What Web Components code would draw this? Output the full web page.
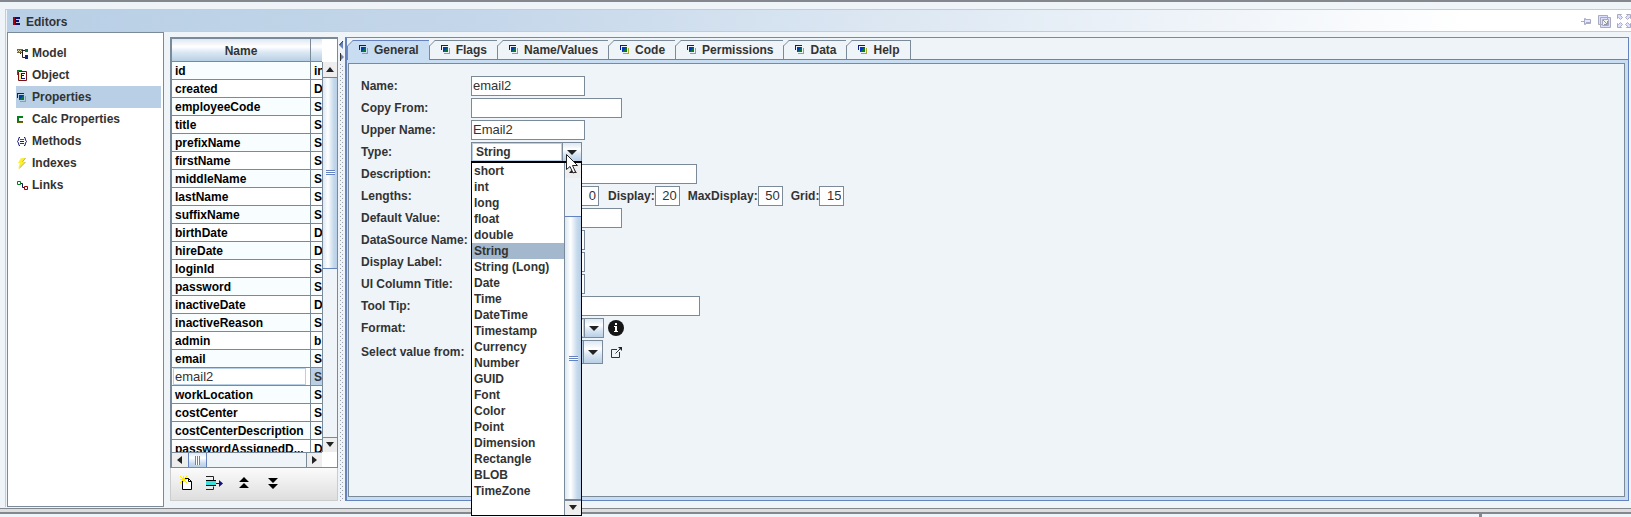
<!DOCTYPE html>
<html lang="en">
<head>
<meta charset="utf-8">
<title>Editors</title>
<style>
  html, body { margin: 0; height: 100%; }
  body { overflow: hidden; background: #eff4f8; color: #333; font: bold 12px/18px "Liberation Sans", Arial, sans-serif; }
</style>
</head>
<body>
<editor-window heading="Editors">
  <side-nav slot="nav"></side-nav>
  <property-table slot="list"></property-table>
  <split-divider slot="list"></split-divider>
  <tab-panel slot="main"><property-form></property-form></tab-panel>
</editor-window>

<script>
const ICONS = {
  model: ['0 0 11 11', '<path fill="#776a30" d="M0 1h6v4H0z"/><path stroke="#ddd6a0" stroke-dasharray="1 1" d="M1 2.500h4M0 3.500h6"/><path fill="none" stroke="#222" d="M3.500 5v1M5 2.500h3M5.500 3v6.500h3"/><path fill="#0a7a50" d="M8 1h3v3H8z"/><path fill="#10287c" d="M8 7h3v4H8z"/>'],
  object: ['0 0 10 11', '<path fill="#fff" stroke="#7c1010" d="M1.500 1.500h8v9h-8z"/><path fill="#008020" d="M0 0h5v1H1v4H0z"/><path fill="#fff08a" d="M2 3h2v7H2z"/><path fill="none" stroke="#101080" d="M4 3.500h4M4 5.500h3M4 8.500h4M4.500 3v6"/>'],
  props: ['0 0 9 9', '<path fill="#0a1c86" d="M0 0h7v1H1v4H0z"/><path fill="#0038c8" d="M2 2h5v5H2z"/><path fill="#087a18" d="M7 2v5H2z"/><path fill="#a9a826" d="M8 3h1v6H3V8h5z"/>'],
  calc: ['0 0 6 7', '<path fill="#008018" d="M0 0h6v2H2v3h4v2H0z"/><path fill="#6b6510" d="M1 6h5v1H1z"/>'],
  methods: ['0 0 10 9', '<path fill="none" stroke="#181880" d="M3 .500H2L1.500 3 .500 4.500l1 1.500L2 8.500h1M7 .500h1L8.500 3l1 1.500-1 1.500L8 8.500H7"/><path stroke="#008020" d="M3 2.500h4"/><path stroke="#222" d="M3 4.500h4"/><path stroke="#901010" d="M3 6.500h4"/>'],
  indexes: ['0 0 9 11', '<path fill="#a9a9a0" d="M9 0H5L2 5h2l-2 6 7-7H6l3-4z"/><path fill="#ffee2e" d="M8 0H4L1 5h2L1 11l7-7H5z"/>'],
  links: ['0 0 11 9', '<path fill="#fff" stroke="#008020" d="M.500.500h3v3h-3z"/><path fill="none" stroke="#101050" d="M4 2.500h1.500v4H7"/><path fill="#fff" stroke="#900" d="M7.500 5.500h3v3h-3z"/>'],
  logo: ['0 0 7 8', '<path fill="#10106c" d="M0 0h7v2H3v1h3v2H3v1h4v2H0z"/><path fill="#a00010" d="M0 0h2v8H0z"/>'],
  pin: ['0 0 11 9', '<path fill="#e4e6ff" stroke="#a8abc8" d="M3.500 1.500h1v1h5v4h-5v1h-1zM0 4.500h3M5 5.500h5"/>'],
  restore: ['0 0 13 13', '<path fill="#dcdfff" stroke="#a8abc0" d="M.500.500h9v9h-9zM2.500 2.500h10v10h-10z"/><path fill="#f3f3e8" stroke="#a8abc0" d="M4.500 4.500h6v6h-6z"/><path fill="none" stroke="#9095b0" d="M5 5l4 4M6 9.500h3.500V6"/>'],
  expand: ['0 0 14 14', '<path fill="#dcdfff" stroke="#a8abc0" d="M.500.500h4l-1 1 2 2-2 2-2-2-1 1zM13.500.500h-4l1 1-2 2 2 2 2-2 1 1zM.500 13.500h4l-1-1 2-2-2-2-2 2-1-1zM13.500 13.500h-4l1-1-2-2 2-2 2 2 1-1z"/>'],
  newdoc: ['0 0 12 14', '<path fill="#fff" stroke="#000" d="M2.500 2.500h6l3 3v8h-9z"/><path fill="none" stroke="#000" d="M8.500 2.500v3h3"/><path stroke="#ffe800" d="M0 0l7 7M7 0L0 7M3.500 0v6M0 3.500h7"/>'],
  insert: ['0 0 17 14', '<path fill="none" stroke="#222" d="M0 .500h7.500v4M0 13.500h7.500v-3"/><path fill="#38e0dc" d="M0 5h10v4H0z"/><path stroke="#000" d="M0 4.500h10M0 9.500h10"/><path stroke="#101080" d="M10 7.500h5"/><path fill="#101080" d="M13 4l4 3.500-4 3.500z"/>'],
  top: ['0 0 10 12', '<path d="M5 0l5 5H0zM5 6l5 5H0z"/>'],
  bottom: ['0 0 10 12', '<path d="M0 1h10L5 6zM0 7h10l-5 5z"/>'],
  open: ['0 0 11 11', '<path fill="none" stroke="#333" d="M6 2.500H.500v8h8V5M4.500 6.500l5-5"/><path fill="#222" d="M7 0h4v4z"/>'],
  info: ['0 0 16 16', '<circle cx="8" cy="8" r="8" fill="#151515"/><path fill="#fff" d="M7 3h2v2H7zM6 6h3v5h1v1H6v-1h1V7H6z"/>'],
  cursor: ['0 0 13 20', '<path fill="#fff" stroke="#222" d="M.500.500v15l3.500-3 3 6.500 2.500-1-3-6.500h5z"/>']
};

const define = (name, html) => customElements.define(name, class extends HTMLElement {
  connectedCallback() {
    if (this.shadowRoot) return;
    const root = this.attachShadow({ mode: 'open' });
    const t = document.createElement('template');
    t.innerHTML = typeof html === 'function' ? html(this) : html;
    root.append(t.content.cloneNode(true));
  }
});

define('app-icon', el => {
  const [box, art] = ICONS[el.getAttribute('name')];
  const [, , w, h] = box.split(' ');
  return `<style>:host{display:inline-flex;flex:none}svg{display:block}</style>
    <svg viewBox="${box}" width="${w}" height="${h}" aria-hidden="true">${art}</svg>`;
});

/* Scroll bar; before/size/after are the proportions of the track. */
define('scroll-bar', el => {
  const n = a => el.getAttribute(a) || 0;
  const h = el.hasAttribute('horizontal');
  const [a, b] = h ? ['M6 0v8L1 4z', 'M1 0v8l5-4z'] : ['M0 6h8L4 1z', 'M0 1h8L4 6z'];
  const arrow = d => `<svg width="8" height="8" viewBox="0 0 8 8"><path fill="#222" d="${d}"/></svg>`;
  return `<style>
    :host{display:flex;flex-direction:${h ? 'row' : 'column'};box-sizing:border-box;${h ? 'height' : 'width'}:15px;background:#eff4f8;border-${h ? 'top' : 'left'}:1px solid #7a8a99}
    button{flex:none;${h ? 'width:16px;height:14px' : 'height:15px'};padding:0;border:0;background:#eee;display:grid;place-items:center}
    button:last-child{border-${h ? 'left' : 'top'}:1px solid #7a8a99}
    .before{flex:${n('before')} 0 0}.after{flex:${n('after')} 0 0}
    .thumb{flex:${n('size')} 0 0;box-sizing:border-box;border:solid #6382bf;border-width:${h ? '0 1px' : '1px 0'};display:flex;align-items:center;justify-content:center;
      background:linear-gradient(${h ? 180 : 90}deg,#dbe8f4,#fff 35%,#c6daec 75%,#b8cfe5)}
    i{${h ? 'width:5px;height:9px' : 'width:9px;height:5px'};background:repeating-linear-gradient(${h ? 90 : 180}deg,#6382bf 0 1px,#fff 1px 2px)}
  </style><button aria-label="Back">${arrow(a)}</button><div class="before"></div><div class="thumb"><i></i></div><div class="after"></div><button aria-label="Forward">${arrow(b)}</button>`;
});

define('editor-window', el => `<style>
  :host{display:flex;flex-direction:column;height:100vh;box-sizing:border-box;border-top:2px solid #85878f;background:#eff4f8}
  .frame{flex:1;min-height:0;display:flex;flex-direction:column;margin:7px 0 1px 5px;border-top:1px solid #b8cfe5;border-left:1px solid #b8cfe5}
  header{flex:none;box-sizing:border-box;height:22px;margin-left:1px;display:flex;align-items:center;padding:1px 0 0 6px;border-bottom:1px solid #b8cfe5;background:linear-gradient(90deg,#b8cfe5,#c5d7ea 30%,#fff 90%)}
  h1{margin:0 auto 0 6px;padding-top:1px;font:inherit}
  .tools{display:flex;align-items:center;gap:6px}
  .tools button{padding:0;border:0;background:none;display:flex}
  .body{flex:1;min-height:0;display:flex}
  .list{display:flex;padding:5px 0 6px 6px}
  .main{flex:1;min-width:0;display:flex;padding:5px 2px 6px 0}
  ::slotted(tab-panel){flex:1}
  footer{flex:none;height:3px;border:solid #85878f;border-width:1px 0 2px;background:#ddd}
  .status{height:3px;flex:none;display:flex}
  .status span{flex:0 1 1479px;border-right:3px solid #85878f}
</style>
<div class="frame">
  <header><app-icon name="logo"></app-icon><h1>${el.getAttribute('heading')}</h1>
    <div class="tools"><button aria-label="Pin"><app-icon name="pin"></app-icon></button><button aria-label="Restore"><app-icon name="restore"></app-icon></button><button aria-label="Maximize"><app-icon name="expand"></app-icon></button></div></header>
  <div class="body"><slot name="nav"></slot><div class="list"><slot name="list"></slot></div><div class="main"><slot name="main"></slot></div></div>
</div><footer></footer><div class="status"><span></span></div>`);

define('side-nav', () => {
  const items = [['model', 'Model'], ['object', 'Object'], ['props', 'Properties'], ['calc', 'Calc Properties'], ['methods', 'Methods'], ['indexes', 'Indexes'], ['links', 'Links']];
  return `<style>
    :host{display:block;box-sizing:border-box;width:157px;margin-left:1px;padding:9px 2px 0 8px;background:#fff;border:1px solid #7a8a99}
    ul{margin:0;padding:0;list-style:none}
    a{display:grid;grid-template-columns:16px 1fr;align-items:center;height:22px;color:inherit;text-decoration:none}
    a[aria-current]{background:#b8cfe5}
    app-icon{margin-left:1px}
  </style><nav><ul>${items.map(([i, t]) => `<li><a href="#${i}"${i === 'props' ? ' aria-current="page"' : ''}><app-icon name="${i}"></app-icon>${t}</a></li>`).join('')}</ul></nav>`;
});

define('property-table', () => {
  const rows = 'id:in,created:D,employeeCode:S,title:S,prefixName:S,firstName:S,middleName:S,lastName:S,suffixName:S,birthDate:D,hireDate:D,loginId:S,password:S,inactiveDate:D,inactiveReason:S,admin:b,email:S,email2:S,workLocation:S,costCenter:S,costCenterDescription:S,passwordAssignedD...:D'.split(',').map(r => r.split(':'));
  return `<style>
    :host{display:flex;flex-direction:column;width:168px}
    .box{flex:1;min-height:0;display:grid;grid-template:minmax(0,1fr) 15px / minmax(0,1fr) 15px;border:2px solid #7a8a99;border-width:2px 1px 1px 2px;background:#fff}
    .view{overflow:hidden}
    table{border-collapse:separate;border-spacing:0;table-layout:fixed;width:213px;color:#000}
    th,td{box-sizing:border-box;padding:0 3px;border:solid #7a8a99;border-width:0 1px 1px 0;text-align:left;white-space:nowrap;overflow:hidden}
    th{height:23px;padding-top:1px;color:#333;text-align:center;background:linear-gradient(#dde8f3,#fff 35%,#dce8f4 60%,#b8cfe5)}
    td{height:18px;line-height:15px;padding-top:2px}
    tr:nth-child(odd) td{background:#f8feff}
    tr.sel td:first-child{padding:0 1px;background:#fff}
    tr.sel td:last-child{background:#b8cfe5;color:#333}
    input{display:block;box-sizing:border-box;width:133px;height:17px;padding:0 1px;border:1px solid #b8cfe5;font:13px "Liberation Sans",Arial,sans-serif;color:#333;background:#fff}
    .v{margin-top:23px}
    .bar{flex:none;display:flex;align-items:center;height:32px;background:linear-gradient(#fbfbfb,#dedede);border:solid #ccc;border-width:0 1px 1px}
    .bar button{width:29px;height:30px;padding:0 0 2px;border:0;background:none;display:grid;place-items:center}
  </style>
  <div class="box"><div class="view"><table><colgroup><col style="width:139px"><col></colgroup><thead><tr><th>Name</th><th></th></tr></thead><tbody>
  ${rows.map(([n, t]) => n === 'email2' ? `<tr class="sel"><td><input aria-label="Property name" value="${n}"></td><td>${t}</td></tr>` : `<tr><td>${n}</td><td>${t}</td></tr>`).join('')}
  </tbody></table></div><scroll-bar class="v" size="191" after="169"></scroll-bar><scroll-bar horizontal size="17" after="100"></scroll-bar></div>
  <div class="bar"><button aria-label="New"><app-icon name="newdoc"></app-icon></button><button aria-label="Insert"><app-icon name="insert"></app-icon></button><button aria-label="Move to top"><app-icon name="top"></app-icon></button><button aria-label="Move to bottom"><app-icon name="bottom"></app-icon></button></div>`;
});

define('split-divider', `<style>
  :host{display:flex;flex-direction:column;align-items:center;width:7px;box-sizing:border-box}
  svg{flex:none;margin-top:3px}
  i{flex:1;width:4px;background:conic-gradient(from 270deg at 1px 1px,#999fa8 90deg,transparent 0) 0 0/4px 4px,conic-gradient(from 270deg at 1px 1px,#999fa8 90deg,transparent 0) 2px 2px/4px 4px}
</style><svg width="5" height="24" viewBox="0 0 5 24"><path fill="#6382bf" d="M4 1v8L0 5zM1 13v8l4-4z"/><path fill="none" stroke="#333" d="M4 1L.500 5M1.500 13v8"/></svg><i></i>`);

define('tab-panel', () => `<style>
  :host{display:flex;flex-direction:column;min-width:0;box-sizing:border-box;border:solid #6382bf;border-width:1px 1px 1px 2px;border-top-color:#7a8a99}
  .tabs{flex:none;display:flex;padding:2px 0 0 1px;border-bottom:1px solid #6382bf}
  button{position:relative;box-sizing:border-box;height:19px;margin:0;padding:0 10px 0 11px;border:solid #7a8a99;border-width:1px 1px 0 0;display:flex;align-items:center;gap:6px;background:#eff4f8;color:inherit;font:inherit;line-height:18px}
  button svg{position:absolute;left:-1px;top:-1px}
  button app-icon{margin-bottom:2px}
  button[aria-selected=true]{background:#c8ddf2;border-color:#6382bf;height:20px;margin-bottom:-1px;padding-bottom:1px}
  .pane{flex:1;min-height:0;border:solid #c8ddf2;border-width:3px 3px 3px 1px;display:flex}
  .in{flex:1;border:1px solid #7a8a99}
</style><div class="tabs" role="tablist">${['General', 'Flags', 'Name/Values', 'Code', 'Permissions', 'Data', 'Help'].map((t, i) => `<button role="tab" aria-selected="${!i}"><svg width="7" height="19" viewBox="0 0 7 19"><path fill="#eff4f8" d="M0 0h6L0 6z"/><path fill="none" stroke="#7a8a99" d="M.500 19V6l5.500-5.500"/></svg><app-icon name="props"></app-icon>${t}</button>`).join('')}</div>
<div class="pane" role="tabpanel"><div class="in"><slot></slot></div></div>`);

define('combo-box', el => {
  const list = (el.getAttribute('options') || '').split(',').filter(Boolean);
  const value = el.getAttribute('value') || '';
  const open = el.hasAttribute('open');
  return `<style>
    :host{display:block;position:relative;box-sizing:border-box;width:111px;height:20px;border:1px solid #7a8a99;background:#fff}
    .face{display:flex;height:100%}
    select{flex:1;min-width:0;appearance:none;box-sizing:border-box;border:1px solid #b8cfe5;border-radius:0;padding:0 3px;margin:0;background:#fff;color:inherit;font:inherit;line-height:16px}
    .arrow{flex:none;width:18px;border-left:1px solid #7a8a99;display:grid;place-items:center;background:linear-gradient(#dde8f3,#fff 35%,#dce8f4 60%,#b8cfe5)}
    .pop{position:absolute;z-index:1;top:100%;left:-1px;right:-1px;display:flex;border:1px solid #000;border-top-width:2px;background:#fff}
    ul{flex:1;margin:0;padding:0 0 16px;list-style:none}
    li{height:16px;line-height:16px;padding-left:2px;white-space:nowrap}
    li[aria-selected=true]{background:#a3b8cc}
    scroll-bar{width:17px}
    .cursor{position:absolute;z-index:2;right:2px;top:11px}
  </style><div class="face"><select aria-label="${el.getAttribute('label')}"><option>${value}</option></select><span class="arrow"><svg width="10" height="5" viewBox="0 0 10 5"><path fill="#222" d="M0 0h10L5 5z"/></svg></span></div>
  ${open ? `<div class="pop"><ul role="listbox" aria-label="${el.getAttribute('label')}">${list.map(o => `<li role="option" aria-selected="${o === value}">${o}</li>`).join('')}</ul><scroll-bar before="38" size="281"></scroll-bar></div><app-icon class="cursor" name="cursor"></app-icon>` : ''}`;
});

define('form-field', el => {
  const a = n => el.getAttribute(n) || '';
  return `<style>
    :host{display:grid;grid-template-columns:110px 1fr;align-items:center;min-height:20px}
    :host([inline]){grid-template-columns:auto auto}
    .ctl{display:flex;align-items:center}
    input{box-sizing:border-box;height:20px;width:${a('width')}px;margin:0;padding:0 4px 1px 1px;border:1px solid #7a8a99;background:#fff;color:#333;font:13px "Liberation Sans",Arial,sans-serif}
    :host([number]) input{text-align:right;padding:0 2px 1px}
    label{white-space:nowrap}
  </style><label for="f">${a('label')}</label><div class="ctl">${el.hasAttribute('width') ? `<input id="f" value="${a('value')}">` : ''}<slot></slot></div>`;
});

define('property-form', `<style>
  :host{display:flex;flex-direction:column;gap:2px;padding:12px 12px 0}
  .group{display:flex;gap:8px;margin-left:9px}
  combo-box.format{width:133px}
  combo-box.source{width:132px;height:24px}
  .ico{padding:0;border:0;margin:0 0 0 4px;background:none;display:flex}
  .src{margin-left:8px}
</style>
<form-field label="Name:" width="114" value="email2"></form-field>
<form-field label="Copy From:" width="151"></form-field>
<form-field label="Upper Name:" width="114" value="Email2"></form-field>
<form-field label="Type:"><combo-box open label="Type" value="String" options="short,int,long,float,double,String,String (Long),Date,Time,DateTime,Timestamp,Currency,Number,GUID,Font,Color,Point,Dimension,Rectangle,BLOB,TimeZone"></combo-box></form-field>
<form-field label="Description:" width="226"></form-field>
<form-field label="Lengths:" number width="128" value="0"><div class="group">
  <form-field inline number label="Display:" width="25" value="20"></form-field>
  <form-field inline number label="MaxDisplay:" width="25" value="50"></form-field>
  <form-field inline number label="Grid:" width="25" value="15"></form-field></div></form-field>
<form-field label="Default Value:" width="151"></form-field>
<form-field label="DataSource Name:" width="114"></form-field>
<form-field label="Display Label:" width="114"></form-field>
<form-field label="UI Column Title:" width="114"></form-field>
<form-field label="Tool Tip:" width="229"></form-field>
<form-field label="Format:"><combo-box class="format" label="Format"></combo-box><button class="ico" aria-label="Format help"><app-icon name="info"></app-icon></button></form-field>
<form-field label="Select value from:"><combo-box class="source" label="Select value from"></combo-box><button class="ico src" aria-label="Open source"><app-icon name="open"></app-icon></button></form-field>`);
</script>
</body>
</html>
